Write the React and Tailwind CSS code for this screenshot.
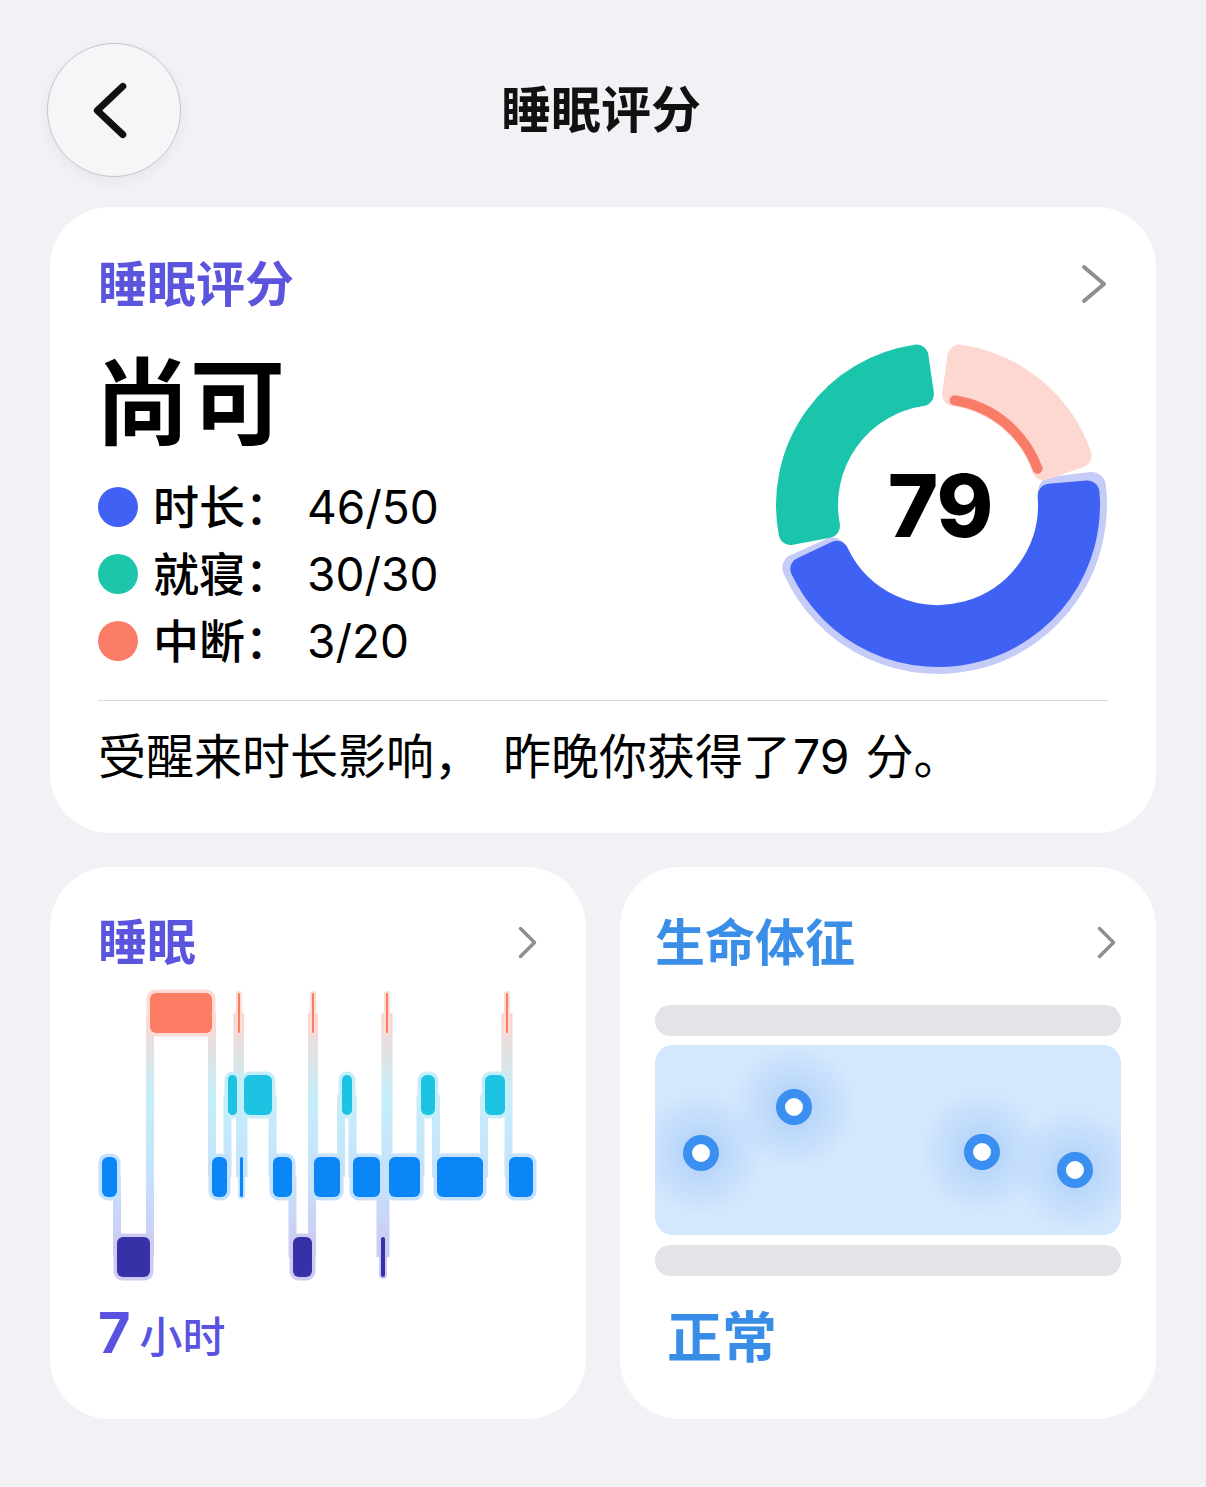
import React from 'react';

// 评分环：角度从 12 点方向顺时针计
const CX = 170;
const CY = 170;

const polar = (r, deg) => {
  const a = (deg * Math.PI) / 180;
  return [CX + r * Math.sin(a), CY - r * Math.cos(a)];
};

// 圆角扇环：先内缩 c，再用同色描边 + 圆角连接补回来
const sectorPath = (a0, a1, ri, ro, c) => {
  const rm = (ri + ro) / 2;
  const d = ((c / rm) * 180) / Math.PI;
  const s = a0 + d;
  const e = a1 - d;
  const R = ro - c;
  const r = ri + c;
  const large = e - s > 180 ? 1 : 0;
  const [x1, y1] = polar(R, s);
  const [x2, y2] = polar(R, e);
  const [x3, y3] = polar(r, e);
  const [x4, y4] = polar(r, s);
  return `M${x1} ${y1}A${R} ${R} 0 ${large} 1 ${x2} ${y2}L${x3} ${y3}A${r} ${r} 0 ${large} 0 ${x4} ${y4}Z`;
};

const arcPath = (r, a0, a1) => {
  const [x1, y1] = polar(r, a0);
  const [x2, y2] = polar(r, a1);
  return `M${x1} ${y1}A${r} ${r} 0 ${a1 - a0 > 180 ? 1 : 0} 1 ${x2} ${y2}`;
};

const Sector = ({ a0, a1, ri, ro, c, color }) => (
  <path
    d={sectorPath(a0, a1, ri, ro, c)}
    fill={color}
    stroke={color}
    strokeWidth={c * 2}
    strokeLinejoin="round"
  />
);

const ScoreRing = ({ score }) => (
  <div className="relative w-[340px] h-[340px] shrink-0">
    <svg width="340" height="340" viewBox="0 0 340 340">
      {/* 时长 */}
      <Sector a0={77} a1={252} ri={101} ro={169} c={14} color="#c5ccf8" />
      <Sector a0={80} a1={250} ri={100} ro={162} c={12} color="#3f62f5" />
      {/* 就寝 */}
      <Sector a0={254} a1={357} ri={100} ro={162} c={12} color="#1bc5ac" />
      {/* 中断 */}
      <Sector a0={3} a1={76} ri={100} ro={162} c={12} color="#fdd8d1" />
      <path d={arcPath(106, 9, 70)} fill="none" stroke="#f87c68" strokeWidth="10" strokeLinecap="round" />
    </svg>
    <div className="absolute inset-0 flex items-center justify-center pl-[4px] pt-[2px]">
      <span className="text-[86px] leading-none font-extrabold text-black tracking-[-1px]">{score}</span>
    </div>
  </div>
);

// 睡眠分期
const LEVELS = {
  awake: { y: 8, fill: '#fd7c64', halo: '#fddcd5' },
  rem: { y: 90, fill: '#1cc3e2', halo: '#c6eef9' },
  light: { y: 172, fill: '#0a86f6', halo: '#c4e2fd' },
  deep: { y: 252, fill: '#3731a8', halo: '#cecbf3' },
};
const BAR_H = 40;

const STAGES = [
  [102, 117, 'light'],
  [117, 150, 'deep'],
  [150, 212, 'awake'],
  [212, 227, 'light'],
  [228, 237, 'rem'],
  [238, 240, 'awake'],
  [240, 243, 'light'],
  [244, 272, 'rem'],
  [273, 292, 'light'],
  [293, 312, 'deep'],
  [312, 314, 'awake'],
  [314, 340, 'light'],
  [342, 352, 'rem'],
  [353, 380, 'light'],
  [381, 385, 'deep'],
  [386, 388, 'awake'],
  [389, 420, 'light'],
  [421, 435, 'rem'],
  [437, 483, 'light'],
  [485, 505, 'rem'],
  [506, 508, 'awake'],
  [509, 533, 'light'],
].map(([x0, x1, level]) => ({ x0: x0 - 98, x1: x1 - 98, level }));

const SleepChart = () => {
  const links = STAGES.slice(0, -1).map((a, i) => {
    const b = STAGES[i + 1];
    const ya = LEVELS[a.level].y + BAR_H / 2;
    const yb = LEVELS[b.level].y + BAR_H / 2;
    const x = (a.x1 + b.x0) / 2;
    return { x, y: Math.min(ya, yb), h: Math.abs(ya - yb) };
  });

  return (
    <svg width="440" height="305" viewBox="0 0 440 305" className="overflow-visible">
      <defs>
        <linearGradient id="sleepLink" x1="0" y1="28" x2="0" y2="272" gradientUnits="userSpaceOnUse">
          <stop offset="0" stopColor="#fcd6ce" />
          <stop offset="0.34" stopColor="#c4eef9" />
          <stop offset="0.67" stopColor="#c6e2fb" />
          <stop offset="1" stopColor="#ccc9f0" />
        </linearGradient>
      </defs>
      {links.map((l, i) => (
        <rect key={`l${i}`} x={l.x - 4} y={l.y} width="8" height={l.h} fill="url(#sleepLink)" />
      ))}
      {STAGES.map((s, i) => {
        const lv = LEVELS[s.level];
        const w = s.x1 - s.x0;
        const pad = w < 5 ? 2 : 3.5;
        return (
          <rect
            key={`h${i}`}
            x={s.x0 - pad}
            y={lv.y - pad}
            width={w + pad * 2}
            height={BAR_H + pad * 2}
            rx={Math.min(9, (w + pad * 2) / 2)}
            fill={lv.halo}
          />
        );
      })}
      {STAGES.map((s, i) => {
        const lv = LEVELS[s.level];
        const w = s.x1 - s.x0;
        return (
          <rect
            key={`b${i}`}
            x={s.x0}
            y={lv.y}
            width={w}
            height={BAR_H}
            rx={Math.min(6, w / 2)}
            fill={lv.fill}
          />
        );
      })}
    </svg>
  );
};

const VITAL_DOTS = [
  [46, 108],
  [139, 62],
  [327, 107],
  [420, 125],
];

const VitalsChart = () => (
  <svg width="467" height="190" viewBox="0 0 467 190" className="block">
    <defs>
      <radialGradient id="dotGlow">
        <stop offset="0" stopColor="#a6cbf8" stopOpacity="0.85" />
        <stop offset="0.45" stopColor="#a6cbf8" stopOpacity="0.45" />
        <stop offset="1" stopColor="#a6cbf8" stopOpacity="0" />
      </radialGradient>
    </defs>
    {VITAL_DOTS.map(([x, y], i) => (
      <circle key={`g${i}`} cx={x} cy={y} r="62" fill="url(#dotGlow)" />
    ))}
    {VITAL_DOTS.map(([x, y], i) => (
      <circle key={`d${i}`} cx={x} cy={y} r="13.5" fill="#fff" stroke="#3b8ff0" strokeWidth="9" />
    ))}
  </svg>
);

const Chevron = ({ w, h, sw }) => (
  <svg width={w} height={h} viewBox={`0 0 ${w} ${h}`} className="shrink-0">
    <polyline
      points={`${sw} ${sw} ${w - sw} ${h / 2} ${sw} ${h - sw}`}
      fill="none"
      stroke="#8e8e93"
      strokeWidth={sw}
      strokeLinecap="round"
      strokeLinejoin="round"
    />
  </svg>
);

const LEGEND = [
  { label: '时长：', value: '46/50', color: 'bg-[#4160f4]' },
  { label: '就寝：', value: '30/30', color: 'bg-[#1dc5ab]' },
  { label: '中断：', value: '3/20', color: 'bg-[#fb7d68]' },
];

export default function App() {
  return (
    <div className="w-full min-h-[1487px] bg-[#f1f1f6] font-['Inter','Noto_Sans_CJK_SC',sans-serif] text-black">
      {/* 顶栏 */}
      <header className="grid grid-cols-[1fr_auto_1fr] items-center px-[47px] pt-[43px]">
        <button className="justify-self-start w-[134px] h-[134px] rounded-full border border-[#c5c5ca] bg-[#f6f6f9] shadow-[0_4px_14px_rgba(0,0,0,0.05)] flex items-center justify-center">
          <svg width="134" height="134" viewBox="0 0 134 134">
            <polyline
              points="76 43 50 67.5 76 92"
              fill="none"
              stroke="#111"
              strokeWidth="7"
              strokeLinecap="round"
              strokeLinejoin="round"
            />
          </svg>
        </button>
        <h1 className="text-[50px] leading-none font-bold text-[#111] mr-[4px]">睡眠评分</h1>
        <div />
      </header>

      {/* 睡眠评分卡片 */}
      <section className="mx-[50px] mt-[30px] rounded-[60px] bg-white px-[48px] pt-[52px] pb-[52px]">
        <div className="flex items-center justify-between h-[50px]">
          <h2 className="text-[49px] leading-none font-bold text-[#5b54dc]">睡眠评分</h2>
          <Chevron w={28} h={42} sw={4} />
        </div>

        <div className="mt-[26px] flex items-start justify-between">
          <div className="pt-[21px]">
            <div className="text-[95px] leading-none font-bold -ml-[3px]">尚可</div>
            <ul className="mt-[22px]">
              {LEGEND.map((item) => (
                <li key={item.label} className="flex items-center h-[67px]">
                  <span className={`w-[40px] h-[40px] rounded-full ${item.color}`} />
                  <span className="ml-[15px] w-[154px] text-[46px] leading-none font-medium">{item.label}</span>
                  <span className="text-[46px] leading-none">{item.value}</span>
                </li>
              ))}
            </ul>
          </div>
          <ScoreRing score={79} />
        </div>

        <div className="mt-[25px] h-px bg-[#d9d9de]" />
        <p className="mt-[32px] text-[48px] leading-none whitespace-nowrap">
          受醒来时长影响<span className="inline-block w-[69px]">，</span>昨晚你获得了
          <span className="ml-[2px] mr-[16px]">79</span>分<span className="inline-block w-[48px]">。</span>
        </p>
      </section>

      {/* 下方两张卡片 */}
      <div className="mx-[50px] mt-[34px] grid grid-cols-2 gap-[34px]">
        <section className="h-[552px] rounded-[60px] bg-white px-[48px] pt-[51px] flex flex-col">
          <div className="flex items-center justify-between h-[49px]">
            <h2 className="text-[49px] leading-none font-bold text-[#5b54dc]">睡眠</h2>
            <Chevron w={21} h={35} sw={3.5} />
          </div>
          <div className="mt-[18px] h-[305px]">
            <SleepChart />
          </div>
          <div className="mt-[15px] flex items-baseline text-[#5a52e0]">
            <span className="text-[56px] leading-none font-bold">7</span>
            <span className="ml-[9px] text-[43px] leading-none font-medium">小时</span>
          </div>
        </section>

        <section className="h-[552px] rounded-[60px] bg-white px-[35px] pt-[51px] flex flex-col">
          <div className="flex items-center justify-between h-[49px]">
            <h2 className="text-[50px] leading-none font-bold text-[#3b8ee8]">生命体征</h2>
            <span className="mr-[4px]">
              <Chevron w={21} h={35} sw={3.5} />
            </span>
          </div>
          <div className="mt-[38px] h-[31px] rounded-full bg-[#e3e3e8]" />
          <div className="mt-[9px] h-[190px] rounded-[18px] bg-[#d4e7fd] overflow-hidden">
            <VitalsChart />
          </div>
          <div className="mt-[10px] h-[31px] rounded-full bg-[#e3e3e8]" />
          <div className="mt-[34px] ml-[12px] text-[55px] leading-none font-bold text-[#3a8de6]">正常</div>
        </section>
      </div>
    </div>
  );
}
